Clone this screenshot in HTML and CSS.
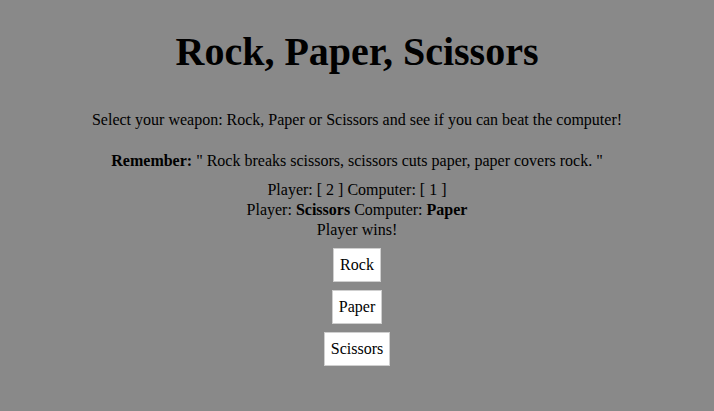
FILE: index.html
```html
<!DOCTYPE html>
<html>
<head>
<meta charset="utf-8">
<link rel="stylesheet" href="styles.css">
</head>
<body>
<div class="page">
  <h1 class="title">Rock, Paper, Scissors</h1>
  <p class="intro">Select your weapon: Rock, Paper or Scissors and see if you can beat the computer!</p>
  <p class="rule"><b>Remember:</b> " Rock breaks scissors, scissors cuts paper, paper covers rock. "</p>
  <div class="score">Player: [ 2 ] Computer: [ 1 ]</div>
  <div class="score">Player: <b>Scissors</b> Computer: <b>Paper</b></div>
  <div class="score">Player wins!</div>
  <div class="buttons">
    <button class="btn">Rock</button>
    <button class="btn">Paper</button>
    <button class="btn">Scissors</button>
  </div>
</div>
</body>
</html>
```
FILE: styles.css
```css
html, body {
  background: #898989;
}
body {
  margin: 8px;
  font-family: "Liberation Serif", "Times New Roman", serif;
  font-size: 16px;
  color: #000;
}
.page {
  text-align: center;
}
.title {
  font-size: 40px;
  font-weight: bold;
  margin: 20px 0 36px;
}
.intro {
  margin: 0 0 23px;
}
.rule {
  margin: 0 0 10px;
}
.score {
  line-height: 20px;
}
.buttons {
  display: flex;
  flex-direction: column;
  align-items: center;
  gap: 8px;
  margin-top: 8px;
}
.btn {
  font-family: "Liberation Serif", "Times New Roman", serif;
  font-size: 16px;
  background: #fff;
  color: #000;
  border: 1px solid #cfcfcf;
  padding: 7px 6px;
  line-height: 18px;
}
```
